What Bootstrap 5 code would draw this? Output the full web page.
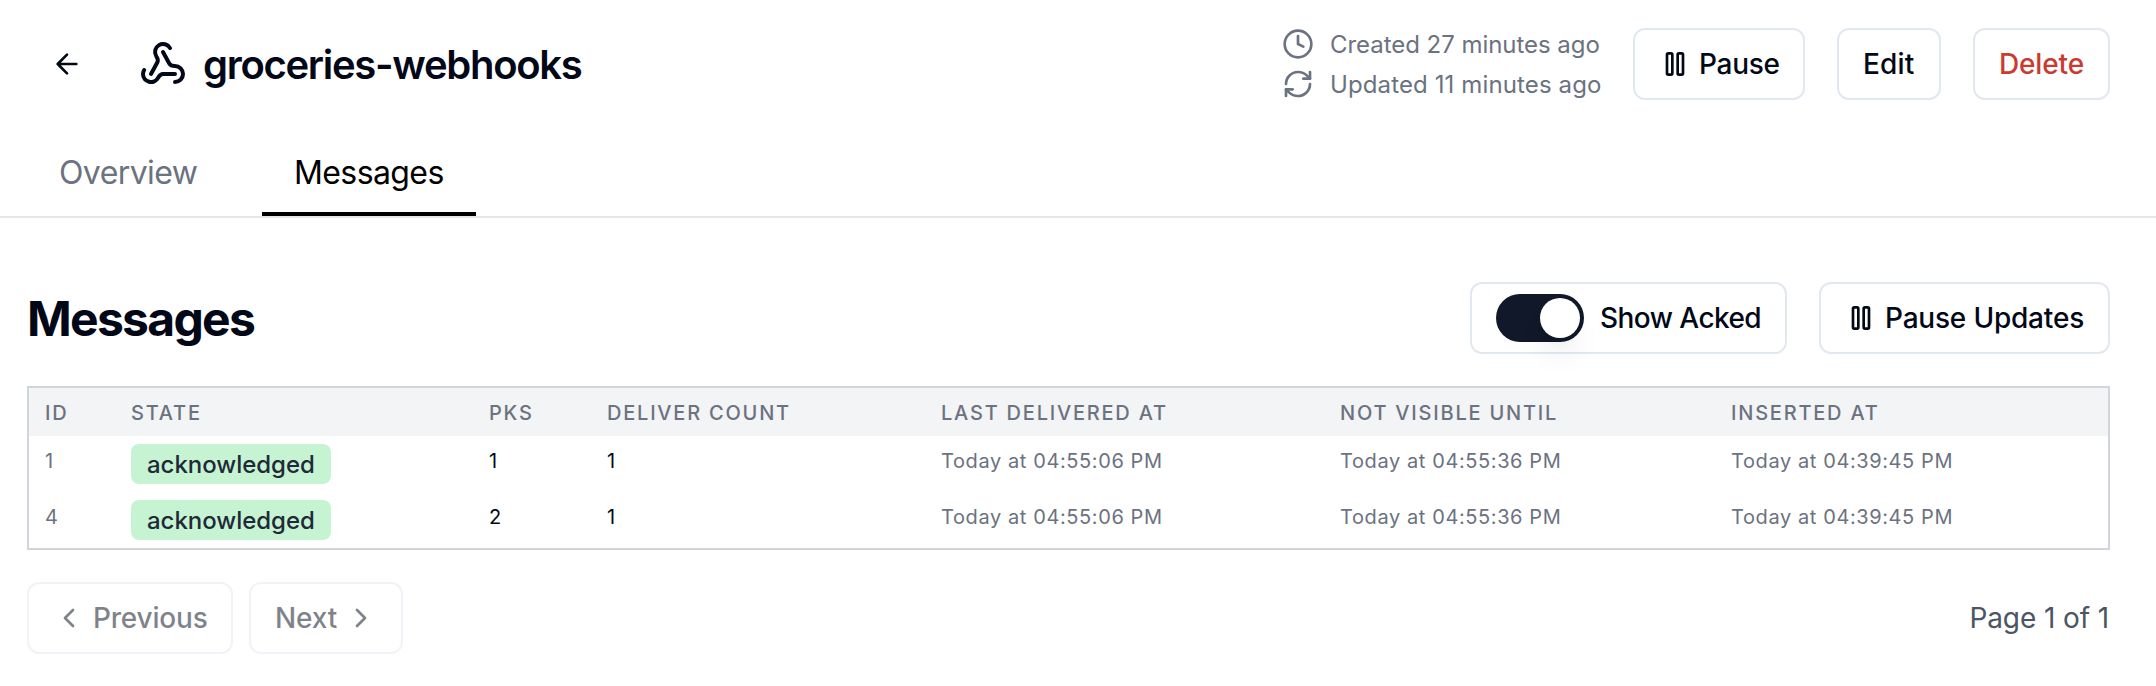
<!DOCTYPE html>
<html lang="en">
<head>
<meta charset="utf-8">
<title>groceries-webhooks</title>
<link href="https://cdn.jsdelivr.net/npm/bootstrap@5.3.0/dist/css/bootstrap.min.css" rel="stylesheet">
<style>
body{font-family:Inter,"Liberation Sans",sans-serif;background:#fff;color:#020817;font-size:28px;line-height:40px;overflow:hidden;white-space:nowrap}
svg{display:block;flex:none;fill:none;stroke:currentColor;stroke-width:2;stroke-linecap:round;stroke-linejoin:round}
.ic{width:32px;height:32px}
.ic-lg{width:48px;height:48px}
.topbar{padding:28px 46px 28px 51px;height:128px}
.hook-title{padding-left:56px}
.hook-name{font-size:40px;font-weight:600;letter-spacing:-1.3px;margin-left:16px;line-height:46px;padding-top:2px}
.stamp{font-size:24px;line-height:32px;color:#6b7280;gap:16px;width:319px}
.stamp span{line-height:30px;padding-top:2px;letter-spacing:-.04px}
.stamp .updated{letter-spacing:.12px}
.g8{gap:8px}.g16{gap:16px}.g32{gap:32px}
.act{--bs-btn-font-size:28px;--bs-btn-font-weight:500;--bs-btn-line-height:40px;--bs-btn-padding-x:24px;--bs-btn-padding-y:0;--bs-btn-border-width:2px;--bs-btn-border-color:#e2e8f0;--bs-btn-border-radius:12px;--bs-btn-color:#020817;--bs-btn-bg:#fff;--bs-btn-disabled-border-color:#e2e8f0;--bs-btn-disabled-color:#020817;--bs-btn-disabled-opacity:.5;height:72px}
.act-pause{width:172px;letter-spacing:-.3px}
.act-edit{width:104px;letter-spacing:.2px}
.act-delete{width:137px;color:#cb3a31;letter-spacing:-.15px}
.act-acked{width:317px;letter-spacing:-.55px}
.act-updates{width:291px;letter-spacing:-.2px}
.act-prev{width:206px;letter-spacing:-.2px}
.act-next{width:154px;letter-spacing:-.1px}
.tabs-row{border-bottom:2px solid #e5e7eb;padding-left:26px;gap:32px}
.tabs-row .nav-link{font-size:32px;line-height:78px;height:88px;padding:2px 32px 0;border-top:4px solid transparent;border-bottom:4px solid transparent;color:#6b7280}
.tabs-row .tab-overview{width:204px;letter-spacing:-.6px;padding-left:33px}
.tab-messages{width:214px;letter-spacing:-.6px}
.tabs-row .nav-link.active{color:#000;border-bottom-color:#000}
.content{padding:64px 46px 32px 27px;gap:32px}
.sec-title{font-size:48px;line-height:70px;padding-top:2px;font-weight:700;letter-spacing:-1.7px}
.toggle{width:88px;height:48px;border-radius:24px;background:#11182a;padding:4px;flex:none}
.knob{width:40px;height:40px;border-radius:50%;background:#fff;box-shadow:0 20px 30px -6px rgba(0,0,0,.1),0 8px 12px -8px rgba(0,0,0,.1)}
.toggle .knob{margin-left:40px}
.msgs{border:2px solid #d1d5db}
.msgs .table{table-layout:fixed;--bs-table-bg:transparent;font-size:20px;line-height:32px}
.msgs th{background:#f3f4f6;height:48px;padding:1px 16px 0;font-weight:500;color:#6b7280;letter-spacing:1.78px;border:0;vertical-align:middle}
.msgs td{height:56px;padding:9px 16px 0;border:0;vertical-align:top;color:#020817}
.msgs td.dim{color:#6b7280}
.msgs td.when{color:#6b7280;letter-spacing:.6px}
.msgs td.state{padding-top:8px}
.state .badge{display:block;width:200px;height:40px;padding:2px 16px 0;border-radius:8px;background:#c6f4d3;color:#1f2937;font-size:24px;line-height:38px;font-weight:500;letter-spacing:-.03px;text-align:left}
.c1{width:86px}.c2{width:358px}.c3{width:118px}.c4{width:334px}.c5{width:399px}.c6{width:391px}
.pageno{color:#4b5563;padding-right:1px;letter-spacing:-.1px}
</style>
</head>
<body>
<header class="topbar d-flex align-items-center justify-content-between">
  <div class="d-flex align-items-center">
    <a href="#" class="text-reset" aria-label="Back"><svg class="ic" viewBox="0 0 24 24"><path d="m12 19-7-7 7-7M19 12H5"/></svg></a>
    <h1 class="hook-title d-flex align-items-center m-0">
      <svg class="ic-lg" viewBox="0 0 24 24"><path d="M18 16.98h-5.99c-1.1 0-1.95.94-2.48 1.9A4 4 0 0 1 2 17c.01-.7.2-1.4.57-2"/><path d="m6 17 3.13-5.78c.53-.97.1-2.18-.5-3.1a4 4 0 1 1 6.89-4.06"/><path d="m12 6 3.13 5.73C15.66 12.7 16.9 13 18 13a4 4 0 0 1 0 8"/></svg>
      <span class="hook-name">groceries-webhooks</span>
    </h1>
  </div>
  <div class="d-flex align-items-center g32">
    <div class="d-flex flex-column g8">
      <div class="stamp d-flex align-items-center"><svg class="ic" viewBox="0 0 24 24"><circle cx="12" cy="12" r="10"/><path d="M12 6v6l4 2"/></svg><span>Created 27 minutes ago</span></div>
      <div class="stamp d-flex align-items-center"><svg class="ic" viewBox="0 0 24 24"><path d="M3 12a9 9 0 0 1 9-9 9.75 9.75 0 0 1 6.74 2.74L21 8"/><path d="M21 3v5h-5"/><path d="M21 12a9 9 0 0 1-9 9 9.75 9.75 0 0 1-6.74-2.74L3 16"/><path d="M8 16H3v5"/></svg><span class="updated">Updated 11 minutes ago</span></div>
    </div>
    <button class="btn act act-pause d-flex align-items-center g8"><svg class="ic" viewBox="0 0 24 24"><rect x="6" y="4" width="4" height="16" rx="1"/><rect x="14" y="4" width="4" height="16" rx="1"/></svg>Pause</button>
    <button class="btn act act-edit d-flex align-items-center">Edit</button>
    <button class="btn act act-delete d-flex align-items-center">Delete</button>
  </div>
</header>
<nav class="nav tabs-row">
  <a class="nav-link tab-overview" href="#">Overview</a>
  <a class="nav-link tab-messages active" href="#">Messages</a>
</nav>
<main class="content d-flex flex-column">
  <div class="d-flex align-items-center justify-content-between">
    <h2 class="sec-title m-0">Messages</h2>
    <div class="d-flex g32">
      <button class="btn act act-acked d-flex align-items-center g16"><span class="toggle d-flex"><span class="knob"></span></span>Show Acked</button>
      <button class="btn act act-updates d-flex align-items-center g8"><svg class="ic" viewBox="0 0 24 24"><rect x="6" y="4" width="4" height="16" rx="1"/><rect x="14" y="4" width="4" height="16" rx="1"/></svg>Pause Updates</button>
    </div>
  </div>
  <div class="msgs">
    <table class="table m-0">
      <colgroup><col class="c1"><col class="c2"><col class="c3"><col class="c4"><col class="c5"><col class="c6"><col></colgroup>
      <thead><tr><th>ID</th><th>STATE</th><th>PKS</th><th>DELIVER COUNT</th><th>LAST DELIVERED AT</th><th>NOT VISIBLE UNTIL</th><th>INSERTED AT</th></tr></thead>
      <tbody>
        <tr><td class="dim">1</td><td class="state"><span class="badge">acknowledged</span></td><td>1</td><td>1</td><td class="when">Today at 04:55:06 PM</td><td class="when">Today at 04:55:36 PM</td><td class="when">Today at 04:39:45 PM</td></tr>
        <tr><td class="dim">4</td><td class="state"><span class="badge">acknowledged</span></td><td>2</td><td>1</td><td class="when">Today at 04:55:06 PM</td><td class="when">Today at 04:55:36 PM</td><td class="when">Today at 04:39:45 PM</td></tr>
      </tbody>
    </table>
  </div>
  <div class="d-flex align-items-center justify-content-between">
    <div class="d-flex g16">
      <button class="btn act act-prev d-flex align-items-center g8" disabled><svg class="ic" viewBox="0 0 24 24"><path d="m15 18-6-6 6-6"/></svg>Previous</button>
      <button class="btn act act-next d-flex align-items-center g8" disabled>Next<svg class="ic" viewBox="0 0 24 24"><path d="m9 18 6-6-6-6"/></svg></button>
    </div>
    <span class="pageno">Page 1 of 1</span>
  </div>
</main>
<script src="https://cdn.jsdelivr.net/npm/bootstrap@5.3.0/dist/js/bootstrap.bundle.min.js"></script>
</body>
</html>
